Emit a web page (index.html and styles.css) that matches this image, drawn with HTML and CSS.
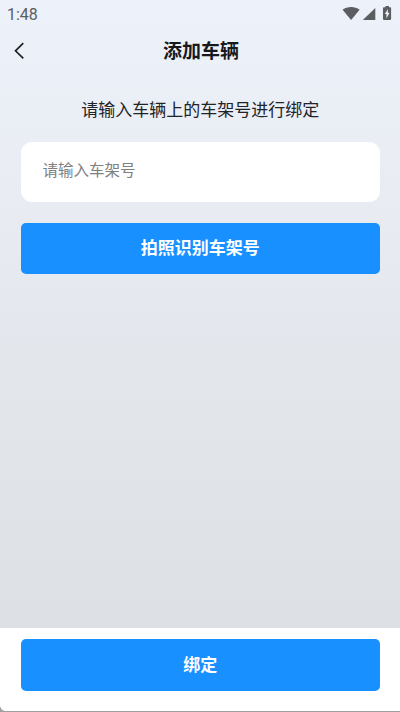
FILE: index.html
```html
<!DOCTYPE html>
<html lang="zh-CN">
<head>
<meta charset="utf-8">
<title>添加车辆</title>
<link rel="stylesheet" href="styles.css">
</head>
<body>
<div class="screen">
  <div class="status">
    <span class="time">1:48</span>
    <svg class="status-icons" width="52" height="18" viewBox="0 0 52 18" fill="#5c5d60">
      <path d="M0.6 4.7C5.2 1 13 1 17.6 4.7L9.1 15z"/>
      <path d="M33.3 3V15H20.8z"/>
      <path d="M43.5 1h3.4v1.3h1.3q.9 0 .9.8v11q0 .8-.9.8h-6.4q-.8 0-.8-.8V3.1q0-.8.8-.8h1.7z"/>
      <path d="M46 3.9 42.8 9h1.7v4.5l3-5.8h-1.8z" fill="#f1f4f8"/>
    </svg>
  </div>
  <header class="navbar">
    <svg class="back" width="12" height="18" viewBox="0 0 12 18" fill="none" stroke="#1f2125" stroke-width="1.7"><path d="M9.3 1.2 1.5 8.8l7.8 7.6"/></svg>
    <h1 class="title">添加车辆</h1>
  </header>
  <main class="content">
    <p class="hint">请输入车辆上的车架号进行绑定</p>
    <input class="field" type="text" placeholder="请输入车架号">
    <button class="button">拍照识别车架号</button>
  </main>
  <footer class="footer">
    <button class="button">绑定</button>
  </footer>
</div>
</body>
</html>
```

FILE: styles.css
```css
* { box-sizing: border-box; }
body {
  margin: 0;
  background: #a0a0a0;
  font-family: Roboto, "Noto Sans CJK SC", sans-serif;
}
.screen {
  display: flex;
  flex-direction: column;
  height: 711px;
  overflow: hidden;
  border-bottom-left-radius: 6px;
  background: linear-gradient(#edf2fa 0, #e9ecf3 180px, #e6e9f0 280px, #e3e6eb 360px, #dde0e5 628px);
}
.status {
  display: flex;
  justify-content: space-between;
  height: 28px;
  padding: 5px 6px 0 7px;
}
.time {
  font-size: 16px;
  line-height: 19px;
  color: #5c5d60;
}
.navbar {
  display: flex;
  align-items: center;
  height: 46px;
  padding: 0 13px 0 14px;
}
.back { flex: none; }
.title {
  flex: 1;
  margin: 0 11px 0 0;
  padding-top: 2px;
  text-align: center;
  font-size: 19px;
  line-height: 28px;
  font-weight: 700;
  color: #17191c;
}
.content {
  flex: 1;
  padding: 23px 20.5px 0 21px;
}
.hint {
  margin: 0 0 19px;
  text-align: center;
  font-size: 17px;
  line-height: 26px;
  color: #222428;
}
.field {
  display: block;
  width: 100%;
  height: 59.5px;
  margin-bottom: 21px;
  padding: 0 22px 1px 21.5px;
  border: 0;
  border-radius: 11px;
  background: #fff;
  font: 15.5px Roboto, "Noto Sans CJK SC", sans-serif;
}
.field::placeholder { color: #808080; }
.button {
  display: block;
  width: 100%;
  height: 51.5px;
  padding: 0 0 3px;
  border: 0;
  border-radius: 5px;
  background: #1890ff;
  color: #fff;
  font: 700 17px Roboto, "Noto Sans CJK SC", sans-serif;
}
.footer {
  height: 83px;
  padding: 11px 20.5px 0 21px;
  background: #fff;
}
.footer .button { padding-bottom: 2px; }
```
